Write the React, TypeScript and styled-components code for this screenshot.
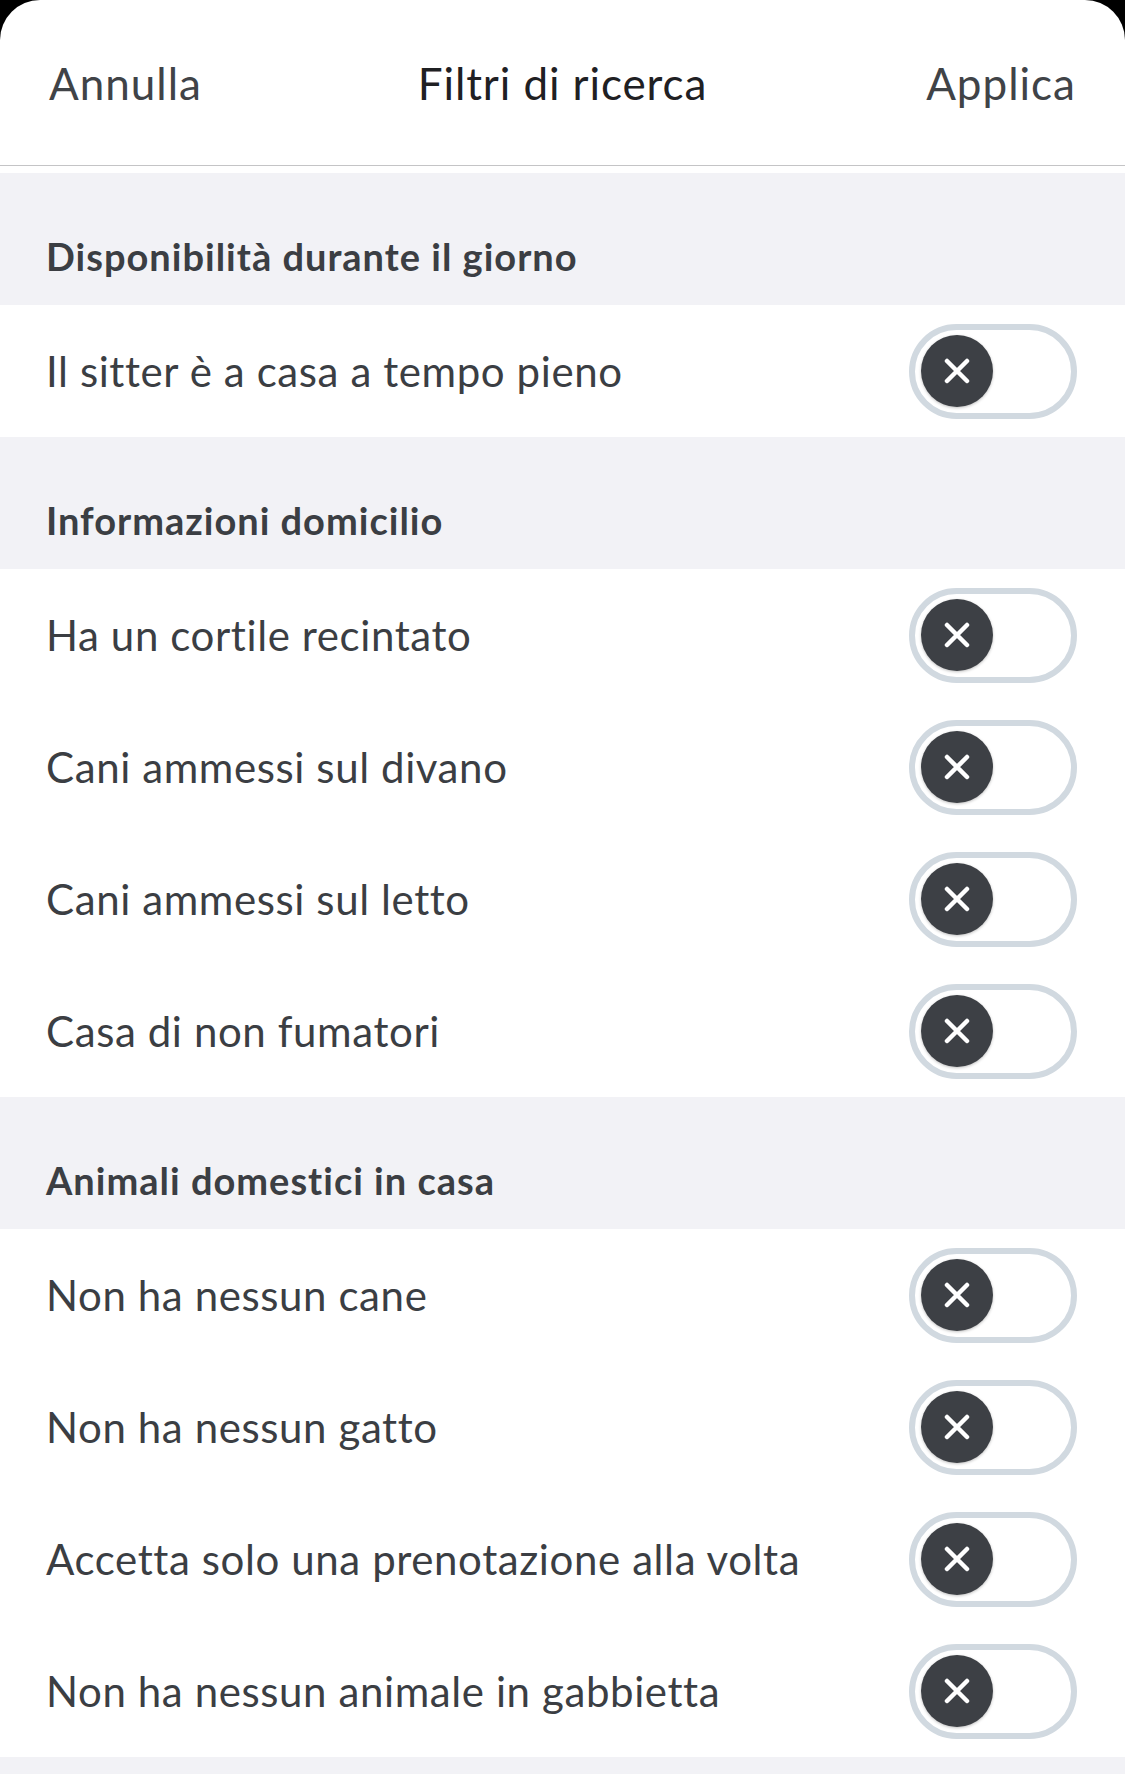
import React from "react";
import styled, { createGlobalStyle } from "styled-components";

const Global = createGlobalStyle`
  html, body { margin: 0; padding: 0; background: #000; }
  body { font-family: Lato, "Open Sans", sans-serif; -webkit-font-smoothing: antialiased; }
  * { box-sizing: border-box; }
`;

const Sheet = styled.div`
  width: 1125px;
  height: 1774px;
  background: #ffffff;
  border-radius: 40px 40px 0 0;
  overflow: hidden;
  display: flex;
  flex-direction: column;
`;

const Header = styled.header`
  height: 166px;
  flex: none;
  display: grid;
  grid-template-columns: 1fr auto 1fr;
  align-items: center;
  padding: 0 49px 0 49px;
  border-bottom: 1px solid #c4c4c6;
  margin-bottom: 7px;
`;

const HeaderButton = styled.button<{ $align: "left" | "right" }>`
  background: none;
  border: none;
  padding: 0;
  font-family: inherit;
  font-size: 44px;
  font-weight: 400;
  letter-spacing: 1px;
  color: #404347;
  justify-self: ${(p) => (p.$align === "left" ? "start" : "end")};
  cursor: pointer;
`;

const Title = styled.h1`
  margin: 0;
  font-size: 44px;
  font-weight: 400;
  letter-spacing: 0.9px;
  color: #1f2023;
`;

const SectionHeader = styled.div`
  height: 132px;
  background: #f2f2f6;
  display: flex;
  align-items: flex-end;
  padding: 0 46px 26px;
  font-size: 38px;
  font-weight: 700;
  letter-spacing: 1px;
  color: #3b3e43;
`;

const Row = styled.div`
  height: 132px;
  display: flex;
  align-items: center;
  justify-content: space-between;
  padding: 0 48px 0 46px;
  background: #fff;
`;

const Label = styled.span`
  font-size: 42px;
  letter-spacing: 0.6px;
  color: #3b3e43;
`;

const Track = styled.div`
  width: 168px;
  height: 95px;
  border: 6px solid #d1d9e0;
  border-radius: 48px;
  padding: 0 6px;
  display: flex;
  align-items: center;
  background: #fff;
`;

const Knob = styled.div`
  width: 72px;
  height: 72px;
  border-radius: 50%;
  background: #3d4045;
  display: flex;
  align-items: center;
  justify-content: center;
  box-shadow: 0 1px 3px rgba(0, 0, 0, 0.25);
`;

const Footer = styled.div`
  flex: 1;
  background: #f2f2f6;
`;

const XIcon = () => (
  <svg width="26" height="26" viewBox="0 0 26 26">
    <path d="M3 3 L23 23 M23 3 L3 23" stroke="#fff" strokeWidth="4.5" strokeLinecap="round" />
  </svg>
);

const Toggle = () => (
  <Track role="switch" aria-checked="false">
    <Knob>
      <XIcon />
    </Knob>
  </Track>
);

const sections = [
  { title: "Disponibilità durante il giorno", items: ["Il sitter è a casa a tempo pieno"] },
  {
    title: "Informazioni domicilio",
    items: [
      "Ha un cortile recintato",
      "Cani ammessi sul divano",
      "Cani ammessi sul letto",
      "Casa di non fumatori",
    ],
  },
  {
    title: "Animali domestici in casa",
    items: [
      "Non ha nessun cane",
      "Non ha nessun gatto",
      "Accetta solo una prenotazione alla volta",
      "Non ha nessun animale in gabbietta",
    ],
  },
];

export default function App() {
  return (
    <>
      <Global />
      <Sheet>
        <Header>
          <HeaderButton $align="left">Annulla</HeaderButton>
          <Title>Filtri di ricerca</Title>
          <HeaderButton $align="right">Applica</HeaderButton>
        </Header>
        {sections.map((s) => (
          <React.Fragment key={s.title}>
            <SectionHeader>{s.title}</SectionHeader>
            {s.items.map((it) => (
              <Row key={it}>
                <Label>{it}</Label>
                <Toggle />
              </Row>
            ))}
          </React.Fragment>
        ))}
        <Footer />
      </Sheet>
    </>
  );
}
